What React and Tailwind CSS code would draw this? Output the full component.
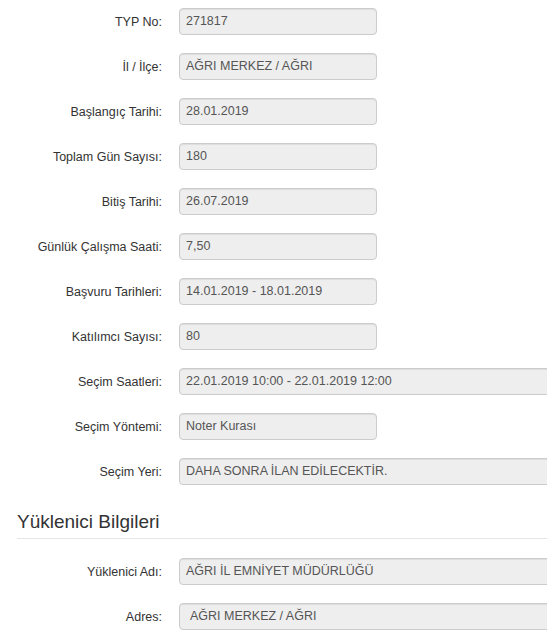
import React from "react";

const fields = [
  { label: "TYP No:", value: "271817" },
  { label: "İl / İlçe:", value: "AĞRI MERKEZ / AĞRI" },
  { label: "Başlangıç Tarihi:", value: "28.01.2019" },
  { label: "Toplam Gün Sayısı:", value: "180" },
  { label: "Bitiş Tarihi:", value: "26.07.2019" },
  { label: "Günlük Çalışma Saati:", value: "7,50" },
  { label: "Başvuru Tarihleri:", value: "14.01.2019 - 18.01.2019" },
  { label: "Katılımcı Sayısı:", value: "80" },
  { label: "Seçim Saatleri:", value: "22.01.2019 10:00 - 22.01.2019 12:00", wide: true },
  { label: "Seçim Yöntemi:", value: "Noter Kurası" },
  { label: "Seçim Yeri:", value: "DAHA SONRA İLAN EDİLECEKTİR.", wide: true },
];

const contractor = [
  { label: "Yüklenici Adı:", value: "AĞRI İL EMNİYET MÜDÜRLÜĞÜ", wide: true },
  { label: "Adres:", value: "AĞRI MERKEZ / AĞRI", wide: true, indent: true },
];

const Row = ({ label, value, wide, indent }) => (
  <div className="flex items-center gap-[17px]">
    <label className="w-[162px] shrink-0 text-right text-[#333333] leading-[18px]">{label}</label>
    <div
      className={`h-[27px] shrink-0 flex items-center rounded-[4px] border border-[#cccccc] bg-[#eeeeee] text-[#555555] shadow-[inset_0_1px_1px_rgba(0,0,0,0.075)] ${
        wide ? "w-[420px]" : "w-[198px]"
      } ${indent ? "pl-[10px]" : "pl-[6px]"}`}
    >
      {value}
    </div>
  </div>
);

export default function App() {
  return (
    <div
      className="w-[547px] h-[634px] overflow-hidden bg-white pt-[8px] text-[12.5px]"
      style={{ fontFamily: '"Liberation Sans", Arial, sans-serif' }}
    >
      {/* İlan bilgileri */}
      <div className="flex flex-col gap-[18px]">
        {fields.map((f) => (
          <Row key={f.label} {...f} />
        ))}
      </div>

      {/* Yüklenici Bilgileri */}
      <div className="ml-[17px] mt-[27px] border-b border-[#e5e5e5] pb-[6px]">
        <h3 className="text-[19px] leading-[20px] text-[#333333]">Yüklenici Bilgileri</h3>
      </div>
      <div className="mt-[19px] flex flex-col gap-[18px]">
        {contractor.map((f) => (
          <Row key={f.label} {...f} />
        ))}
      </div>
    </div>
  );
}
